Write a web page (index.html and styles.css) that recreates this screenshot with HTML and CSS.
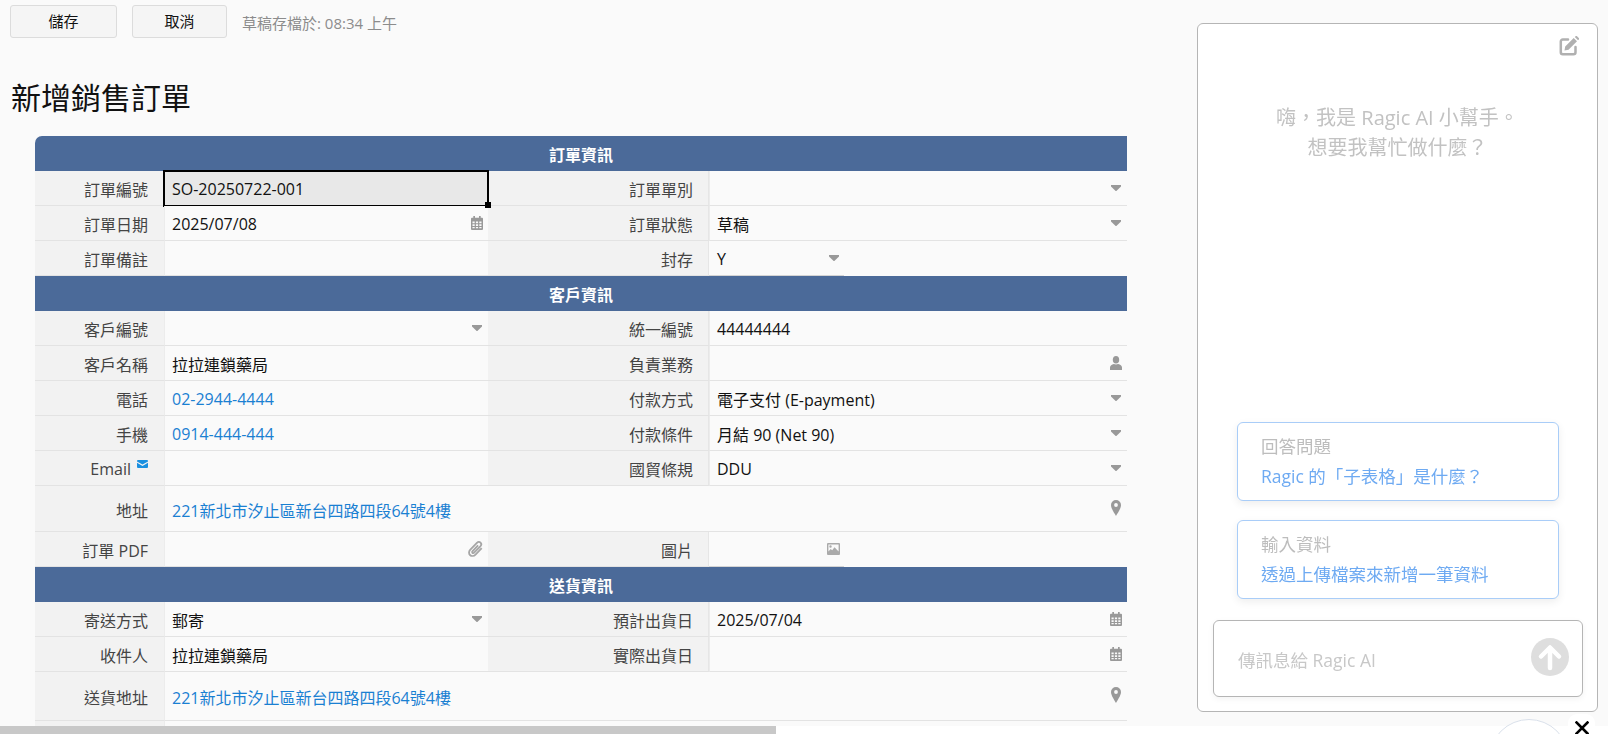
FILE: index.html
```html
<!DOCTYPE html>
<html lang="zh-Hant">
<head>
<meta charset="utf-8">
<title>新增銷售訂單</title>
<link rel="stylesheet" href="styles.css">
</head>
<body>
<svg class="defs" width="0" height="0" aria-hidden="true">
  <symbol id="i-caret" viewBox="0 0 10 6"><path d="M0 0h10v1.500L5.600 5.700a.9.9 0 0 1-1.200 0L0 1.500z"/></symbol>
  <symbol id="i-cal" viewBox="0 0 12 14"><path fill-rule="evenodd" d="M2.300 0h1.700v1.800h4V0h1.700v1.800H11a1 1 0 0 1 1 1V13a1 1 0 0 1-1 1H1a1 1 0 0 1-1-1V2.800a1 1 0 0 1 1-1h1.300zM1.500 5.500v1.700h2.200V5.500zm3.400 0v1.700h2.200V5.500zm3.400 0v1.700h2.200V5.500zM1.500 8.300V10h2.200V8.300zm3.400 0V10h2.200V8.300zm3.400 0V10h2.200V8.300zM1.500 11v1.300h2.200V11zm3.400 0v1.300h2.200V11zm3.400 0v1.300h2.200V11z"/></symbol>
  <symbol id="i-user" viewBox="0 0 12 14"><ellipse cx="6" cy="3.800" rx="3.200" ry="3.800"/><path d="M0 14v-2.600C0 9.600 1.800 8.400 3.800 8c1.400.6 3 .6 4.400 0 2 .4 3.800 1.600 3.800 3.400V14z"/></symbol>
  <symbol id="i-pin" viewBox="0 0 10 16"><path fill-rule="evenodd" d="M5 0a5 5 0 0 1 5 5c0 3.600-3.600 8.400-5 11C3.600 13.400 0 8.600 0 5a5 5 0 0 1 5-5zm0 3.100a1.900 1.900 0 1 0 0 3.800 1.900 1.900 0 0 0 0-3.800z"/></symbol>
  <symbol id="i-img" viewBox="0 0 13 12"><path fill-rule="evenodd" d="M1 0h11a1 1 0 0 1 1 1v10a1 1 0 0 1-1 1H1a1 1 0 0 1-1-1V1a1 1 0 0 1 1-1zm.4 1.400v7l2.300-2.400 1.500 1.300 2.300-3 4.100 4.300V1.400zM3.500 2.300a1.200 1.200 0 1 1 0 2.400 1.200 1.200 0 0 1 0-2.400z"/></symbol>
</svg>

<div class="viewport">
  <main class="page">
    <div class="toolbar">
      <button class="btn btn-save" type="button">儲存</button>
      <button class="btn btn-cancel" type="button">取消</button>
      <span class="draft">草稿存檔於: 08:34 上午</span>
    </div>
    <h1 class="title">新增銷售訂單</h1>

    <section class="form">
      <div class="band band-first">訂單資訊</div>
      <div class="row">
        <div class="lab">訂單編號</div>
        <div class="val selected">SO-20250722-001<span class="handle"></span></div>
        <div class="lab">訂單單別</div>
        <div class="val"><span></span><svg class="ic caret"><use href="#i-caret"/></svg></div>
      </div>
      <div class="row">
        <div class="lab">訂單日期</div>
        <div class="val"><span>2025/07/08</span><svg class="ic cal"><use href="#i-cal"/></svg></div>
        <div class="lab">訂單狀態</div>
        <div class="val"><span>草稿</span><svg class="ic caret"><use href="#i-caret"/></svg></div>
      </div>
      <div class="row">
        <div class="lab">訂單備註</div>
        <div class="val"></div>
        <div class="lab">封存</div>
        <div class="val-wrap"><div class="val short"><span>Y</span><svg class="ic caret"><use href="#i-caret"/></svg></div></div>
      </div>

      <div class="band">客戶資訊</div>
      <div class="row">
        <div class="lab">客戶編號</div>
        <div class="val"><span></span><svg class="ic caret"><use href="#i-caret"/></svg></div>
        <div class="lab">統一編號</div>
        <div class="val">44444444</div>
      </div>
      <div class="row">
        <div class="lab">客戶名稱</div>
        <div class="val">拉拉連鎖藥局</div>
        <div class="lab">負責業務</div>
        <div class="val"><span></span><svg class="ic user"><use href="#i-user"/></svg></div>
      </div>
      <div class="row">
        <div class="lab">電話</div>
        <div class="val link">02-2944-4444</div>
        <div class="lab">付款方式</div>
        <div class="val"><span>電子支付 (E-payment)</span><svg class="ic caret"><use href="#i-caret"/></svg></div>
      </div>
      <div class="row">
        <div class="lab">手機</div>
        <div class="val link">0914-444-444</div>
        <div class="lab">付款條件</div>
        <div class="val"><span>月結 90 (Net 90)</span><svg class="ic caret"><use href="#i-caret"/></svg></div>
      </div>
      <div class="row">
        <div class="lab">Email<svg class="mail" viewBox="0 0 11 8"><path d="M0 1a1 1 0 0 1 1-1h9a1 1 0 0 1 1 1v.4L5.500 4.600 0 1.400zM0 2.800l5.500 3.200L11 2.800V7a1 1 0 0 1-1 1H1a1 1 0 0 1-1-1z"/></svg></div>
        <div class="val"></div>
        <div class="lab">國貿條規</div>
        <div class="val"><span>DDU</span><svg class="ic caret"><use href="#i-caret"/></svg></div>
      </div>
      <div class="row row-addr">
        <div class="lab">地址</div>
        <div class="val wide"><span class="link">221新北市汐止區新台四路四段64號4樓</span><svg class="ic pin"><use href="#i-pin"/></svg></div>
      </div>
      <div class="row">
        <div class="lab">訂單 PDF</div>
        <div class="val"><span></span><svg class="ic clip" viewBox="0 0 14 16"><path d="M12.800 7.200 7 13.200c-1.500 1.500-3.800 1.700-5.100.4-1.300-1.300-1.200-3.500.3-5L8.300 2.300c1-1 2.500-1.100 3.400-.2.900.9.800 2.400-.2 3.400L5.700 11.300c-.5.500-1.200.6-1.600.2-.4-.4-.3-1.100.2-1.600L9.400 4.700"/></svg></div>
        <div class="lab">圖片</div>
        <div class="val-wrap"><div class="val short short-img"><svg class="ic img"><use href="#i-img"/></svg></div></div>
      </div>

      <div class="band">送貨資訊</div>
      <div class="row">
        <div class="lab">寄送方式</div>
        <div class="val"><span>郵寄</span><svg class="ic caret"><use href="#i-caret"/></svg></div>
        <div class="lab">預計出貨日</div>
        <div class="val"><span>2025/07/04</span><svg class="ic cal"><use href="#i-cal"/></svg></div>
      </div>
      <div class="row">
        <div class="lab">收件人</div>
        <div class="val">拉拉連鎖藥局</div>
        <div class="lab">實際出貨日</div>
        <div class="val"><span></span><svg class="ic cal"><use href="#i-cal"/></svg></div>
      </div>
      <div class="row row-addr2">
        <div class="lab">送貨地址</div>
        <div class="val wide"><span class="link">221新北市汐止區新台四路四段64號4樓</span><svg class="ic pin"><use href="#i-pin"/></svg></div>
      </div>
      <div class="row">
        <div class="lab"></div>
        <div class="val wide"></div>
      </div>
    </section>
  </main>
  <div class="hscroll"><div class="hscroll-thumb"></div></div>
</div>

<aside class="chat">
  <div class="chat-top">
    <svg class="edit" viewBox="0 0 20 20"><path d="M9 3.500H3.800A2 2 0 0 0 1.800 5.500v10.700a2 2 0 0 0 2 2h10.700a2 2 0 0 0 2-2V11" fill="none" stroke="#b0b0b0" stroke-width="2.500" stroke-linecap="round"/><path d="M6.200 10.500 14.700 2l3.300 3.300-8.500 8.500-4 .7zM15.800 1 16.600.2a1 1 0 0 1 1.400 0l1.800 1.800a1 1 0 0 1 0 1.400l-.8.800z" fill="#b0b0b0"/></svg>
  </div>
  <p class="hello">嗨，我是 Ragic AI 小幫手。<br>想要我幫忙做什麼？</p>
  <div class="cards">
    <div class="card">
      <div class="card-label">回答問題</div>
      <div class="card-text">Ragic 的「子表格」是什麼？</div>
    </div>
    <div class="card">
      <div class="card-label">輸入資料</div>
      <div class="card-text">透過上傳檔案來新增一筆資料</div>
    </div>
  </div>
  <div class="composer">
    <span class="placeholder">傳訊息給 Ragic AI</span>
    <span class="send">
      <svg viewBox="0 0 38 38"><path d="M19 30V10M10 18.500 19 9.500l9 9" fill="none" stroke="#fff" stroke-width="4.500" stroke-linecap="round" stroke-linejoin="round"/></svg>
    </span>
  </div>
</aside>

<div class="fab"></div>
<div class="close">
  <svg viewBox="0 0 14 14"><path d="M1.500 1.500 12.500 12.500M12.500 1.500 1.500 12.500" stroke="#000" stroke-width="2.600" stroke-linecap="square"/></svg>
</div>
</body>
</html>
```
FILE: styles.css
```css
* { box-sizing: border-box; }
html, body { margin: 0; height: 100%; overflow: hidden; background: #fafafa; }
body { font-family: "Open Sans", "Noto Sans CJK TC", sans-serif; font-size: 16px; color: #111; }
.defs { display: block; height: 0; }

.viewport { height: 734px; display: flex; flex-direction: column; }
.page { height: 726px; overflow: hidden; flex: none; }

.toolbar { display: flex; align-items: center; padding: 5px 0 0 10px; height: 38px; }
.btn {
  height: 33px; padding: 0; border: 1px solid #dcdcdc; border-radius: 3px;
  background: #f5f5f5; color: #111; font: inherit; font-size: 15px; line-height: 1;
}
.btn-save { width: 107px; margin-right: 15px; }
.btn-cancel { width: 95px; margin-right: 15px; }
.draft { font-size: 15px; color: #8c8c8c; position: relative; top: 1px; }

.title { margin: 0; padding: 22px 0 0 11px; height: 98px; display: flex; align-items: center; font-size: 30px; font-weight: 400; color: #111; line-height: 1; }

.form { margin-left: 35px; width: 1092px; }
.band {
  height: 35px; background: #4b6a99; color: #fff; font-weight: 700; font-size: 16px;
  display: flex; align-items: center; justify-content: center;
}
.band-first { border-top-left-radius: 7px; }

.row { display: grid; grid-template-columns: 129px 324px 221px 418px; height: 35px; }
.row-addr { height: 46px; }
.row-addr2 { height: 49px; }

.lab {
  background: #f2f2f2; border-bottom: 1px solid #e3e3e3; color: #444;
  display: flex; align-items: center; justify-content: flex-end; padding: 2px 16px 0 0;
}
.row .lab:nth-child(3) { border-right: 1px solid #e6e6e6; padding-right: 15px; }
.val {
  display: flex; align-items: center; justify-content: space-between; position: relative;
  padding: 2px 5px 0 7px; border-bottom: 1px solid #e3e3e3; border-left: 1px solid #ececec; background: #fafafa;
}
.wide { grid-column: 2 / -1; }
.val-wrap { display: flex; }
.short { width: 135px; border-left: 0; border-bottom-color: #d4d4d4; flex: none; padding-left: 8px; }
.short-img { justify-content: flex-end; }
.link { color: #1a80d2; }

.selected { background: #e8e8e8; outline: 2px solid #000; outline-offset: -1px; }
.handle { position: absolute; right: -3px; bottom: -3px; width: 6px; height: 6px; background: #000; z-index: 2; }

.ic { flex: none; fill: #999; margin-bottom: 3px; }
.caret { width: 10px; height: 6px; margin-right: 1px; }
.short .caret { margin-right: 0; }
.cal { width: 12px; height: 14px; }
.user { width: 12px; height: 14px; }
.pin { width: 10px; height: 16px; margin: 0 1px 4px 0; }
.img { width: 13px; height: 12px; margin-right: -1px; fill: #aaa; }
.clip { width: 15px; height: 18px; fill: none; stroke: #a6a6a6; stroke-width: 1.700; margin: 0 0 2px; }
.mail { width: 11px; height: 8px; fill: #1a90e0; margin-left: 6px; margin-bottom: 11px; }

.hscroll { height: 8px; background: #fff; flex: none; }
.hscroll-thumb { width: 776px; height: 8px; background: #c8c8c8; }

.chat {
  position: fixed; left: 1197px; top: 23px; width: 401px; height: 689px;
  background: #fff; border: 1px solid #b5b5b5; border-radius: 6px;
  display: flex; flex-direction: column;
}
.chat-top { display: flex; justify-content: flex-end; padding: 12px 18px 0 0; height: 34px; }
.edit { width: 20px; height: 20px; }
.hello { margin: 45px 0 0; text-align: center; font-size: 20px; line-height: 29.500px; color: #c2c2c2; }
.cards { margin-top: auto; padding-left: 39px; display: flex; flex-direction: column; gap: 19px; }
.card {
  width: 322px; height: 79px; border: 1px solid #a9cdf8; border-radius: 6px; background: #fff;
  box-shadow: 0 3px 8px rgba(0,0,0,.07); padding: 8px 0 0 23px; font-size: 17.500px; line-height: 30px;
}
.card-label { color: #bdbdbd; }
.card-text { color: #6eaaf2; }
.composer {
  margin: 21px 0 14px 15px; width: 370px; height: 77px; flex: none;
  border: 1px solid #b5b5b5; border-radius: 6px; background: #fff;
  box-shadow: 0 2px 6px rgba(0,0,0,.05);
  display: flex; align-items: center; justify-content: space-between; padding: 2px 13px 0 24px;
}
.placeholder { font-size: 17.500px; color: #c8c8c8; }
.send { width: 38px; height: 38px; border-radius: 50%; background: #dedede; display: block; margin-top: -6px; }
.send svg { display: block; width: 38px; height: 38px; }

.fab {
  position: fixed; left: 1489px; top: 719px; width: 80px; height: 80px; border-radius: 50%;
  background: #fff; border: 1px solid #d9e0ea;
}
.close {
  position: fixed; left: 1568px; top: 714px; width: 27px; height: 27px; border-radius: 9px; background: #fff;
  display: flex; align-items: center; justify-content: center;
}
.close svg { width: 14px; height: 14px; }
```
